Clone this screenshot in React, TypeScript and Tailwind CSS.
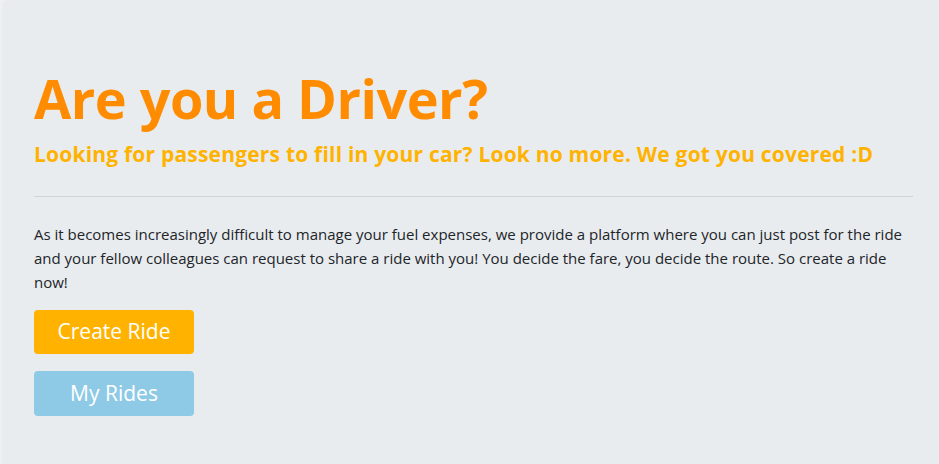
import React from 'react';

export default function App() {
  return (
    <div className="min-h-[464px] w-[939px] overflow-hidden bg-[#eef0f2] pl-[2px] font-['Open_Sans',sans-serif]">
      <div className="min-h-[464px] rounded-tl-md bg-[#e9ecef] pt-[66px] pb-[48px] pl-[32px] pr-[26px]">
        <h1 className="text-[54px] font-bold leading-[1.2] tracking-[-0.5px] text-[#ff8c00]">Are you a Driver?</h1>
        <h4 className="mt-[11px] text-[21px] font-bold leading-[1.2] tracking-[0.2px] text-[#ffb300]">
          Looking for passengers to fill in your car? Look no more. We got you covered :D
        </h4>
        <hr className="mt-[29px] mb-[25px] border-t border-black/10" />
        <p className="text-[15px] leading-[24px] text-[#212529]">
          As it becomes increasingly difficult to manage your fuel expenses, we provide a platform where you can just post for the ride and your fellow colleagues can request to share a ride with you! You decide the fare, you decide the route. So create a ride now!
        </p>
        <div className="mt-[16px] flex flex-col items-start gap-[17px]">
          <button className="h-[44px] w-[160px] rounded bg-[#ffb300] text-[21px] text-white">Create Ride</button>
          <button className="h-[45px] w-[160px] rounded bg-[#8ecae6] text-[21px] text-white">My Rides</button>
        </div>
      </div>
    </div>
  );
}
